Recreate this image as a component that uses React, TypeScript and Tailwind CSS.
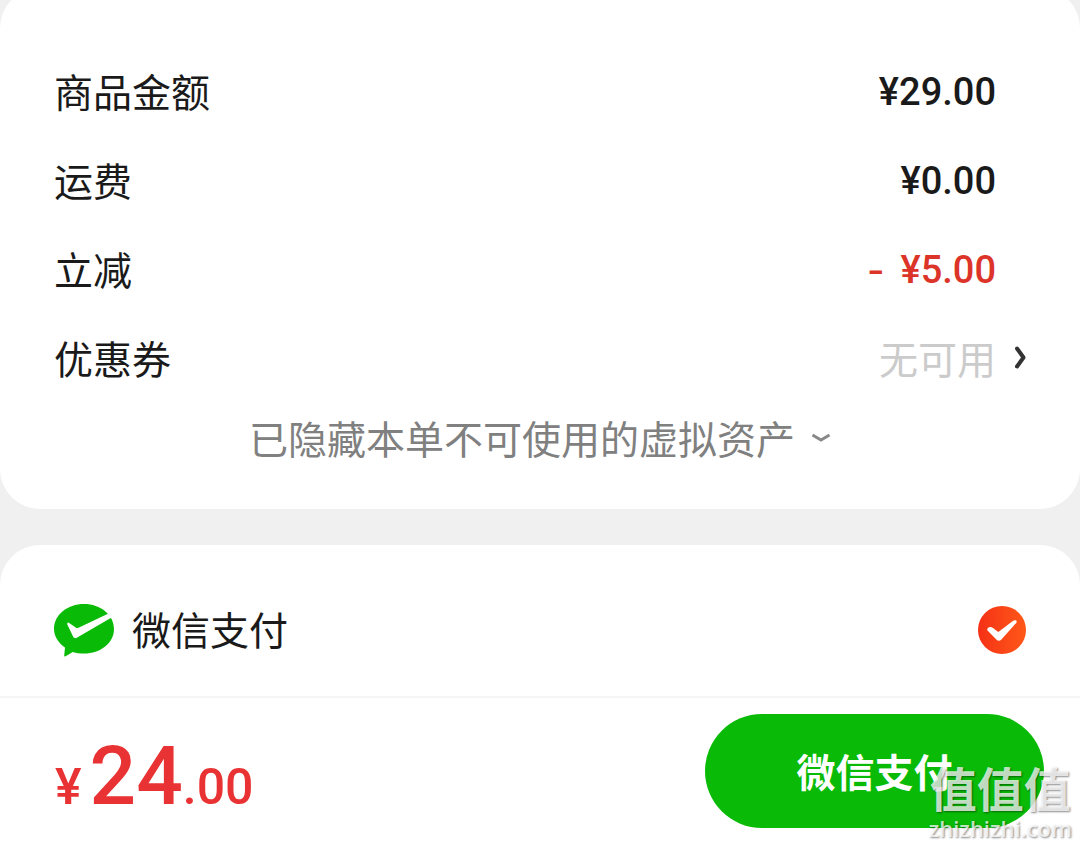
import type { ReactNode } from 'react'

const amounts = [
  { label: '商品金额', value: '¥29.00' },
  { label: '运费', value: '¥0.00' },
  { label: '立减', value: '¥5.00', discount: true },
]

function Row({ label, children }: { label: string; children: ReactNode }) {
  return (
    <div className="flex h-[89px] items-center justify-between">
      <dt>{label}</dt>
      <dd>{children}</dd>
    </div>
  )
}

function WechatPayIcon() {
  return (
    <svg aria-hidden="true" className="h-[54px] w-[60px]" viewBox="0 -1 60 54">
      <path
        d="M30 0C46.600 0 60 10.800 60 25C60 39.200 46.600 49.500 30 49.500C25.900 49.500 22.200 49 18.800 48L11.200 52.400Q10.200 52.800 10.200 51.500L11 43.500C4.400 38.900 0 32.200 0 25C0 10.800 13.400 0 30 0Z"
        fill="#09bb07"
      />
      <path
        d="M13.300 19Q14.200 18.200 15.100 18.900L21.700 23.600Q23 24.500 24.500 23.800L54 9.800L57.600 13.600L22.800 33.700Q20.300 35 19.200 32.800L13.300 20.600Z"
        fill="#fff"
      />
    </svg>
  )
}

function CheckMark() {
  return (
    <svg
      aria-hidden="true"
      className="pointer-events-none absolute inset-0 size-12"
      viewBox="0 0 48 48"
    >
      <path
        d="M9.200 23.200C10.400 20.300 13 20.500 15 22L20.300 26L34.500 15.200C36.300 13.900 39.200 14 38.600 16.200C38.400 16.900 37.900 17.400 37.200 18.100L23.200 33.700C21.600 35.200 20 35.100 18.600 33.700L10 25.100Q9 24.200 9.200 23.200Z"
        fill="#fff"
      />
    </svg>
  )
}

function Watermark() {
  return (
    <div className="pointer-events-none absolute right-2 bottom-0.5 flex flex-col items-center text-white/75 [text-shadow:1px_1px_2px_rgb(0_0_0/0.45)]">
      <span className="text-[47px] leading-[50px] font-bold">值值值</span>
      <span className="font-['Open_Sans'] text-[22px] leading-8 font-semibold">zhizhizhi.com</span>
    </div>
  )
}

export default function App() {
  return (
    <div className="relative flex min-h-screen flex-col gap-9 overflow-hidden bg-[#f0f0f0] font-['Noto_Sans_CJK_SC',sans-serif] text-[39px] leading-[52px] text-[#1a1a1a]">
      <section className="-mt-3 rounded-[40px] bg-white pt-[57px] pb-9">
        <dl className="pr-[84px] pl-[54px]">
          {amounts.map((item) => (
            <Row key={item.label} label={item.label}>
              <span
                className={`flex gap-4 pt-1 font-[Roboto] text-[38px] font-medium ${item.discount ? 'text-[#dc3428]' : ''}`}
              >
                {item.discount && <span className="font-[Inter]">-</span>}
                {item.value}
              </span>
            </Row>
          ))}
          <Row label="优惠券">
            <button className="relative flex items-center text-[#cbcbcb]" type="button">
              无可用
              <svg
                aria-hidden="true"
                className="absolute left-full ml-[19px] h-6 w-3"
                fill="none"
                viewBox="0 0 12 24"
              >
                <path
                  d="M2 3.500L8.500 12.500L2 21.500"
                  stroke="#333"
                  strokeLinecap="round"
                  strokeLinejoin="round"
                  strokeWidth="4"
                />
              </svg>
            </button>
          </Row>
        </dl>
        <button
          className="flex h-[72px] w-full items-center justify-center gap-4 text-[#808080]"
          type="button"
        >
          已隐藏本单不可使用的虚拟资产
          <svg aria-hidden="true" className="h-3 w-5" fill="none" viewBox="0 0 20 12">
            <path d="M1.500 4L10 9L18.500 4" stroke="#888" strokeWidth="3" />
          </svg>
        </button>
      </section>

      <section className="flex flex-1 flex-col rounded-t-[40px] bg-white">
        <label className="flex items-center gap-[18px] pt-[57px] pr-[54px] pb-[38px] pl-[54px]">
          <WechatPayIcon />
          <span className="flex-1 pb-1">微信支付</span>
          <span className="relative size-12">
            <input
              className="block size-12 appearance-none rounded-full bg-linear-to-r from-[#f52f15] to-[#ff5719]"
              defaultChecked
              name="payment"
              type="radio"
              value="wechat"
            />
            <CheckMark />
          </span>
        </label>

        <div className="flex items-center justify-between border-t-2 border-[#f5f5f5] pt-4 pr-9 pl-[55px]">
          <p className="flex items-baseline pt-5 font-[Roboto] text-[50px] leading-[80px] font-medium text-[#e93233]">
            <span className="mr-2">¥</span>
            <span className="text-[82px]">24</span>
            <span>.00</span>
          </p>
          <button
            className="h-[114px] w-[339px] rounded-full bg-[#09bb07] pb-0.5 font-bold text-white"
            type="button"
          >
            微信支付
          </button>
        </div>
      </section>

      <Watermark />
    </div>
  )
}
